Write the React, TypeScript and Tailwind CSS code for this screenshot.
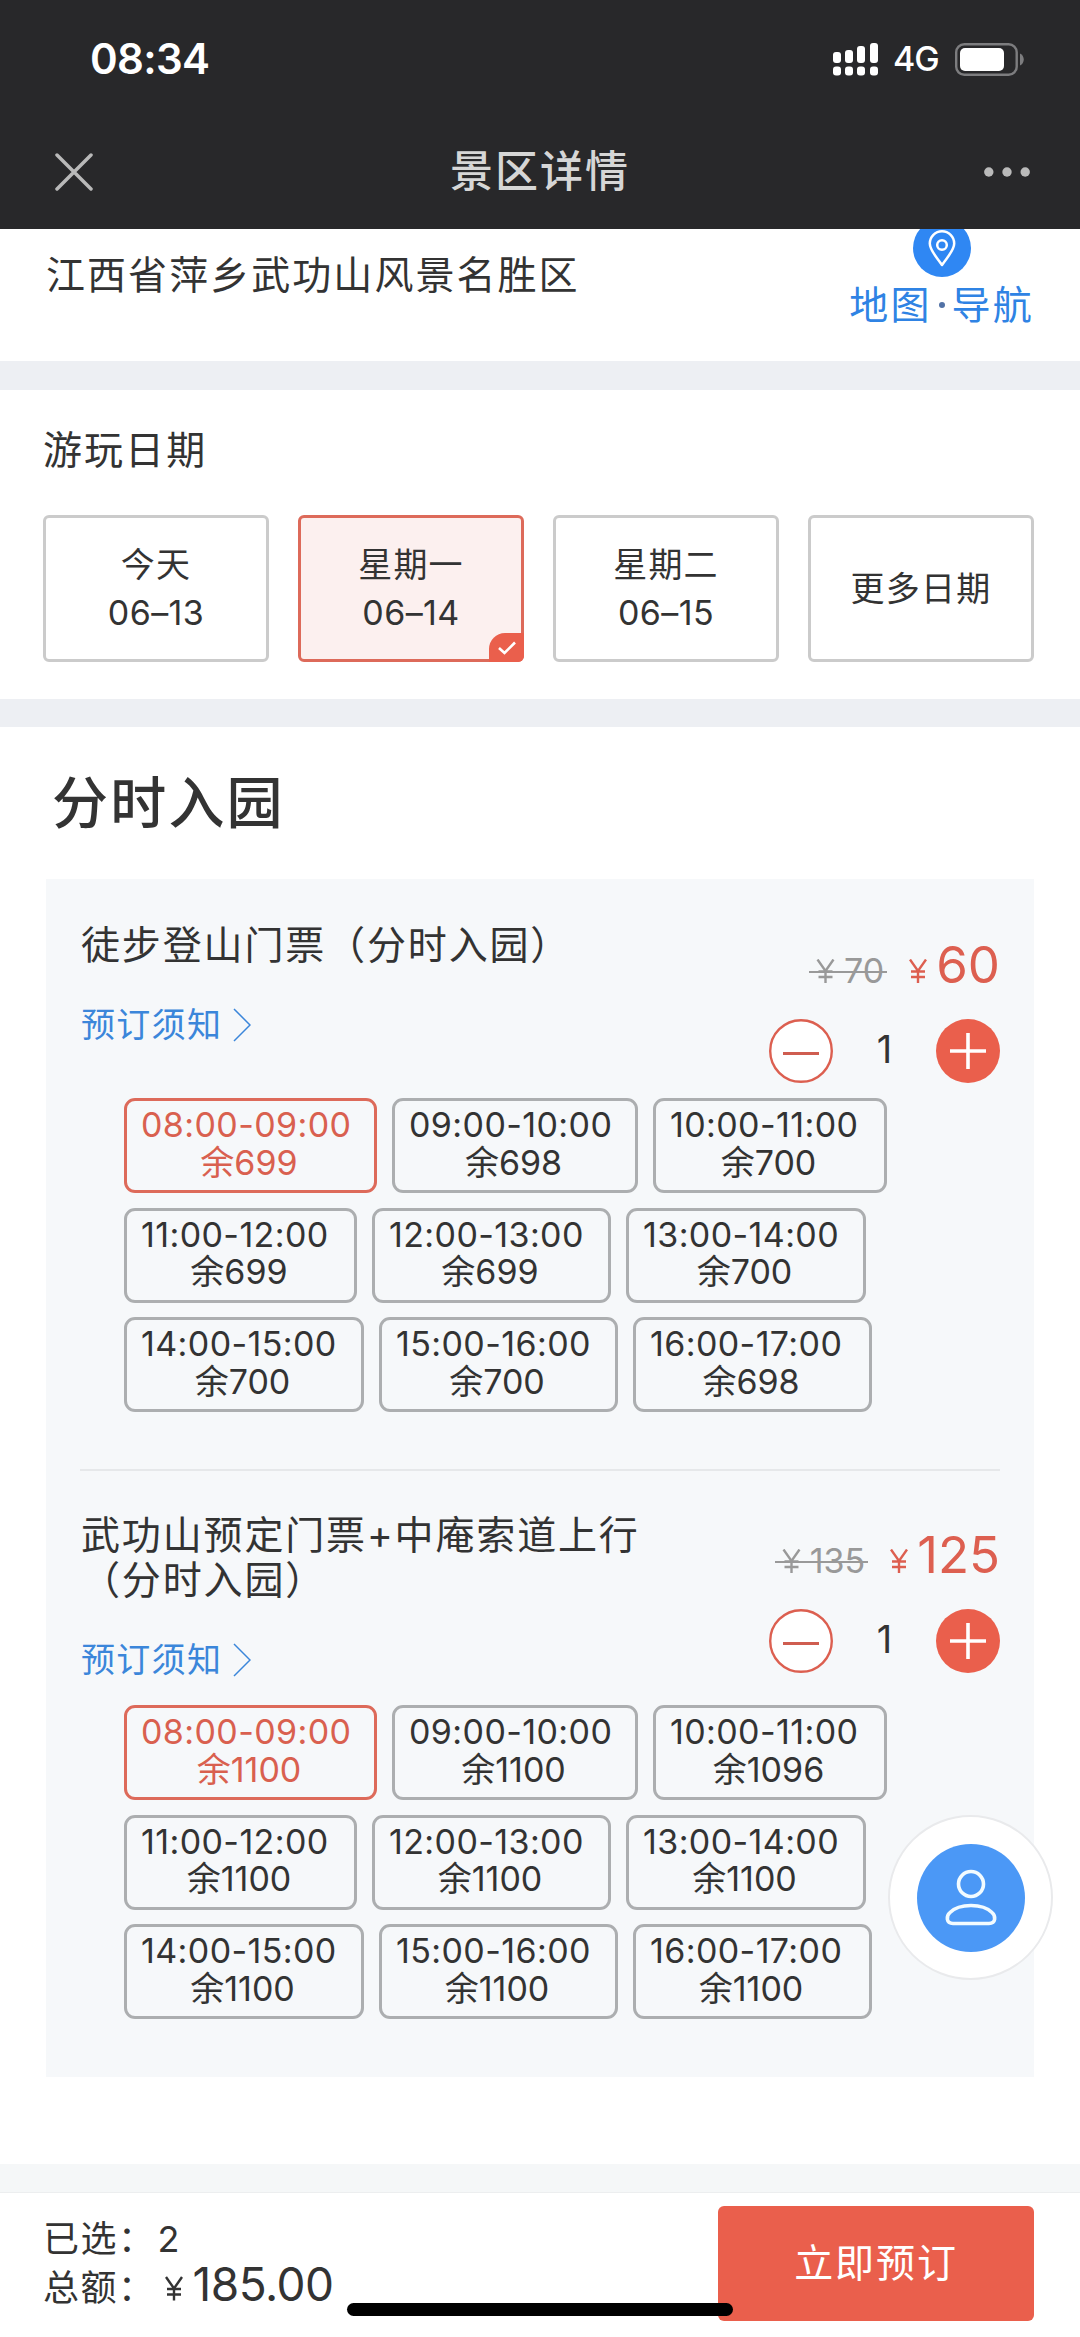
import clsx from "clsx";

type Slot = { time: string; left: number; width: string };

type Ticket = {
    title: string[];
    oldPrice: string;
    price: string;
    left: number[];
};

const slots: { time: string; width: string }[] = [
    { time: "08:00-09:00", width: "w-[253px]" },
    { time: "09:00-10:00", width: "w-[246px]" },
    { time: "10:00-11:00", width: "w-[234px]" },
    { time: "11:00-12:00", width: "w-[233px]" },
    { time: "12:00-13:00", width: "w-[239px]" },
    { time: "13:00-14:00", width: "w-[240px]" },
    { time: "14:00-15:00", width: "w-[240px]" },
    { time: "15:00-16:00", width: "w-[239px]" },
    { time: "16:00-17:00", width: "w-[239px]" },
];

const tickets: Ticket[] = [
    {
        title: ["徒步登山门票（分时入园）"],
        oldPrice: "70",
        price: "60",
        left: [699, 698, 700, 699, 699, 700, 700, 700, 698],
    },
    {
        title: ["武功山预定门票+中庵索道上行", "（分时入园）"],
        oldPrice: "135",
        price: "125",
        left: [1100, 1100, 1096, 1100, 1100, 1100, 1100, 1100, 1100],
    },
];

const dates = [
    { day: "今天", date: "06–13" },
    { day: "星期一", date: "06–14", active: true },
    { day: "星期二", date: "06–15" },
    { day: "更多日期" },
];

function Yen({ className }: { className?: string }) {
    return (
        <svg viewBox="0 0 18 24" className={clsx("shrink-0 fill-none stroke-current", className)}>
            <path d="M1 0.5L9 12L17 0.5M9 12V24M2 12.5H16M2 18H16" strokeWidth="2.4" />
        </svg>
    );
}

function Header() {
    return (
        <header className="h-[229px] bg-[#28282a] text-white">
            {/* Status bar */}
            <div className="flex h-[118px] items-center justify-between pl-[90px] pr-[56px]">
                <span className="text-[42px] font-semibold leading-none tracking-[-0.700px]">08:34</span>
                <div className="flex items-center">
                    <svg viewBox="0 0 45 33" className="h-[33px] w-[45px] fill-white">
                        <rect x="0" y="9" width="8" height="11" rx="3" />
                        <rect x="12" y="7" width="8" height="13" rx="3" />
                        <rect x="24" y="3" width="8" height="17" rx="3" />
                        <rect x="37" y="0" width="8" height="20" rx="3" />
                        <rect x="0" y="23.500" width="8" height="9" rx="3" />
                        <rect x="12" y="23.500" width="8" height="9" rx="3" />
                        <rect x="24" y="23.500" width="8" height="9" rx="3" />
                        <rect x="37" y="23.500" width="8" height="9" rx="3" />
                    </svg>
                    <span className="ml-[15px] w-[62px] text-[34px] font-medium leading-none tracking-[-1px]">4G</span>
                    <svg viewBox="0 0 69 33" className="h-[33px] w-[69px]">
                        <rect x="1.200" y="1.200" width="60.500" height="30.500" rx="8" fill="none" stroke="#7d7d7f" strokeWidth="2.4" />
                        <rect x="5" y="5" width="44" height="23" rx="5" fill="#fff" />
                        <path d="M65 10.500c5 2 5 10 0 12z" fill="#7d7d7f" />
                    </svg>
                </div>
            </div>
            {/* Title bar */}
            <div className="flex h-[107px] items-center justify-between pl-[55px] pr-[50px]">
                <svg viewBox="0 0 38 38" className="h-[38px] w-[38px] stroke-[#b9b9b9]" strokeWidth="3.500" strokeLinecap="round">
                    <path d="M2 2l34 34M36 2L2 36" />
                </svg>
                <h1 className="pl-[3px] text-[43px] font-medium leading-none tracking-[2px] text-[#d6d6d6]">景区详情</h1>
                <svg viewBox="0 0 46 10" className="h-[10px] w-[46px] fill-[#bababa]">
                    <circle cx="4.800" cy="5" r="4.700" />
                    <circle cx="23" cy="5" r="4.700" />
                    <circle cx="41.200" cy="5" r="4.700" />
                </svg>
            </div>
        </header>
    );
}

function Address() {
    return (
        <section className="flex h-[132px] justify-between overflow-hidden pl-[46px] pr-[46px]">
            <p className="mt-[22px] h-[48px] text-[39px] leading-[48px] tracking-[2.050px]">江西省萍乡武功山风景名胜区</p>
            <div className="mt-[-10px] flex flex-col items-center text-[#2f83e4]">
                <svg viewBox="0 0 58 58" className="h-[58px] w-[58px] shrink-0 fill-none" stroke="#fff" strokeWidth="2.500">
                    <circle cx="29" cy="29" r="29" fill="#2f87f3" stroke="none" />
                    <path d="M29 46C24 38.500 16.800 31.500 16.800 24.500a12.200 12.200 0 0 1 24.400 0C41.200 31.500 34 38.500 29 46z" strokeLinejoin="round" />
                    <circle cx="29" cy="26" r="4.800" />
                </svg>
                <div className="mt-[4px] flex items-center text-[39px] leading-[48px] tracking-[2.200px]">
                    地图
                    <span className="mx-[7px] h-[6px] w-[6px] rounded-full bg-[#5272a6]" />
                    导航
                </div>
            </div>
        </section>
    );
}

function PlayDate() {
    return (
        <section className="h-[309px] pl-[43px] pr-[46px] pt-[36px]">
            <h2 className="text-[39px] leading-[48px] tracking-[2.050px]">游玩日期</h2>
            <div className="mt-[41px] flex gap-[29px] text-[34px]">
                {dates.map((d) => (
                    <div
                        key={d.day}
                        className={clsx(
                            "relative flex h-[147px] flex-1 flex-col items-center justify-center rounded-md border-3",
                            d.active ? "border-[#dd6a5a] bg-[#fcf0ef]" : "border-[#cbcbcb]"
                        )}
                    >
                        <span className="leading-[48px] tracking-[1.200px]">{d.day}</span>
                        {d.date && <span className="leading-[48px] tracking-[0.400px]">{d.date}</span>}
                        {d.active && (
                            <span className="absolute -bottom-[3px] -right-[3px] flex h-[29px] w-[35px] items-center justify-center rounded-br-md rounded-tl-[16px] bg-[#ea5f4c]">
                                <svg viewBox="0 0 18 14" className="h-[14px] w-[18px] fill-none stroke-white" strokeWidth="2.600">
                                    <path d="M1 7l5.500 5L17 1.500" />
                                </svg>
                            </span>
                        )}
                    </div>
                ))}
            </div>
        </section>
    );
}

function Stepper() {
    return (
        <div className="flex h-[64px] items-center justify-between">
            <svg viewBox="0 0 64 64" className="h-[64px] w-[64px]">
                <circle cx="32" cy="32" r="30.800" fill="#fff" stroke="#dc5f50" strokeWidth="2.400" />
                <path d="M14 34.500h36" stroke="#cf5d50" strokeWidth="3.200" />
            </svg>
            <span className="pb-[4px] text-[38px] leading-none">1</span>
            <svg viewBox="0 0 64 64" className="h-[64px] w-[64px]">
                <circle cx="32" cy="32" r="32" fill="#ea5f4c" />
                <path d="M14 32h36M32 14v36" stroke="#fff" strokeWidth="3.600" />
            </svg>
        </div>
    );
}

function SlotBox({ time, left, width, active }: Slot & { active: boolean }) {
    return (
        <div
            className={clsx(
                "h-[95px] rounded-[11px] border-3 pt-[5px] text-[34px] leading-[37.500px]",
                width,
                active ? "border-[#dd6a5a] text-[#d9604f]" : "border-[#acaeb0]"
            )}
        >
            <div className="whitespace-nowrap pl-[14px] tracking-[0.400px]">{time}</div>
            <div className="pr-[3px] text-center">余{left}</div>
        </div>
    );
}

function TicketItem({ ticket }: { ticket: Ticket }) {
    return (
        <div>
            <div className="flex justify-between pl-[35px] pr-[34px]">
                <div className="pb-[6px]">
                    <h3 className="text-[39px] leading-[45px] tracking-[1.850px]">
                        {ticket.title.map((line) => (
                            <span key={line} className="block whitespace-nowrap">
                                {line}
                            </span>
                        ))}
                    </h3>
                    <a className="mt-[34px] flex items-center text-[34px] leading-[48px] tracking-[1.300px] text-[#3b86da]">
                        预订须知
                        <svg viewBox="0 0 18 34" className="ml-[11px] h-[34px] w-[18px] fill-none stroke-current" strokeWidth="1.500">
                            <path d="M1 1l16 16L1 33" />
                        </svg>
                    </a>
                </div>
                <div className="flex w-[231px] flex-col pt-[13px]">
                    <div className="flex h-[60px] items-baseline justify-end text-[#dd5f50]">
                        <span className="relative flex items-baseline pl-[7px] pr-[3px] text-[34px] text-[#999]">
                            <Yen className="mr-[9px] h-[24px] w-[19px]" />
                            {ticket.oldPrice}
                            <span className="absolute left-0 top-1/2 h-[2px] w-full bg-[#999]" />
                        </span>
                        <Yen className="ml-[22px] mr-[9px] h-[24px] w-[18px]" />
                        <span className="text-[51px] leading-[60px]">{ticket.price}</span>
                    </div>
                    <div className="mt-[24px]">
                        <Stepper />
                    </div>
                </div>
            </div>
            <div className="flex w-[845px] flex-wrap gap-x-[15px] gap-y-[14.500px] pl-[78px] pt-[15px]">
                {slots.map((s, i) => (
                    <SlotBox key={s.time} time={s.time} width={s.width} left={ticket.left[i]} active={i === 0} />
                ))}
            </div>
        </div>
    );
}

function Footer() {
    return (
        <footer className="relative flex h-[144px] justify-between bg-white pl-[43px] pr-[46px] pt-[13px]">
            <div className="pt-[9px] text-[36px] tracking-[1.500px]">
                <div className="flex leading-[48px]">
                    已选：<span className="ml-[2px]">2</span>
                </div>
                <div className="flex h-[48px] items-baseline leading-[42px]">
                    总额：
                    <Yen className="ml-[9px] mr-[10px] h-[25px] w-[18px]" />
                    <span className="text-[46px] tracking-[-0.500px]">185.00</span>
                </div>
            </div>
            <button className="h-[115px] w-[316px] rounded-md bg-[#ea5f4c] text-[39px] tracking-[1.900px] text-white">立即预订</button>
            {/* Home indicator */}
            <div className="absolute bottom-[21px] left-[347px] h-[13px] w-[386px] rounded-full bg-black" />
        </footer>
    );
}

export default function App() {
    return (
        <div className="relative h-[2337px] w-[1080px] overflow-hidden bg-white font-['Inter','Noto_Sans_CJK_SC',sans-serif] text-[#333]">
            <Header />
            <Address />
            <div className="h-[29px] bg-[#edeff3]" />
            <PlayDate />
            <div className="h-[28px] bg-[#edeff3]" />
            <section className="h-[1437px] px-[46px] pt-[42px]">
                <h2 className="pl-[6px] text-[56px] font-medium leading-[68px] tracking-[2.200px]">分时入园</h2>
                <div className="mt-[42px] h-[1198px] bg-[#f6f8fa] pt-[43px]">
                    <TicketItem ticket={tickets[0]} />
                    <div className="mx-[34px] mb-[41px] mt-[57px] h-[2px] bg-[#e6e8ea]" />
                    <TicketItem ticket={tickets[1]} />
                </div>
            </section>
            <div className="h-[29px] border-b border-[#eceeef] bg-[#f5f7f8]" />
            <Footer />

            {/* Floating profile button */}
            <div className="absolute left-[888px] top-[1815px] flex h-[165px] w-[165px] items-center justify-center rounded-full border-2 border-[#e9eaec] bg-white">
                <svg viewBox="0 0 108 108" className="h-[108px] w-[108px] fill-none" stroke="#f2fbff" strokeWidth="3.600">
                    <circle cx="54" cy="54" r="54" fill="#4b98f6" stroke="none" />
                    <circle cx="54" cy="40" r="12.500" />
                    <path d="M36 79.500C29 79.500 29 72 33 68.500C38 63.500 46 61.500 54 61.500S70 63.500 75 68.500C79 72 79 79.500 72 79.500Z" strokeLinejoin="round" />
                </svg>
            </div>
        </div>
    );
}
